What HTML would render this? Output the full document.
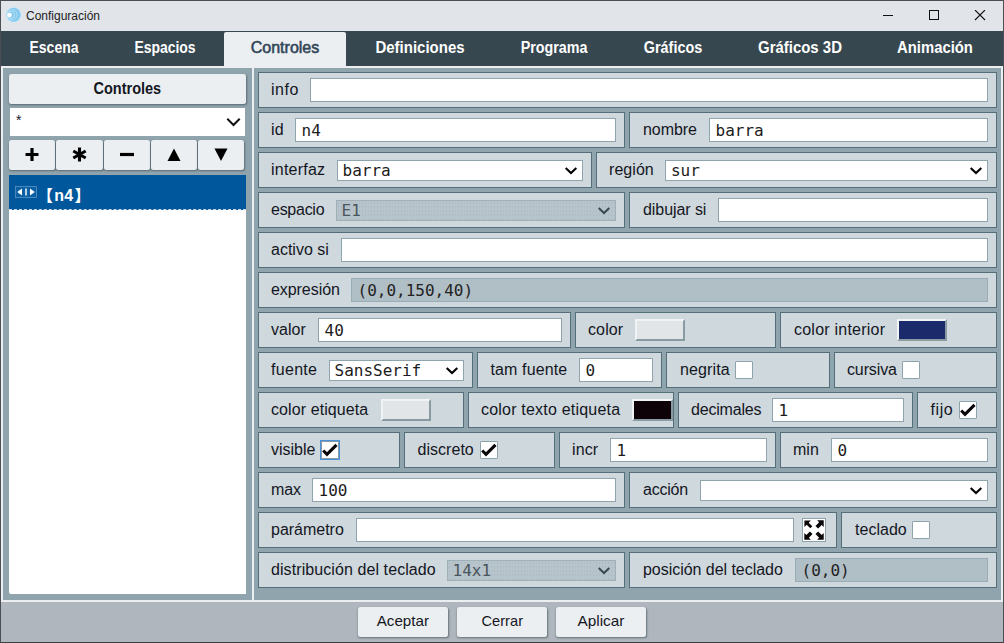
<!DOCTYPE html>
<html lang="es"><head><meta charset="utf-8"><title>Configuración</title>
<style>
*{box-sizing:border-box;margin:0;padding:0}
html,body{width:1004px;height:643px;overflow:hidden;background:#eceff1}
body{position:relative;font-family:"Liberation Sans",sans-serif;font-size:16px;color:#14161f}
#win{position:absolute;left:0;top:0;width:1004px;height:643px;border:1px solid #4b4f54;border-bottom:1px solid #3c3f44;background:#eceff1;overflow:hidden}
#win>*{position:absolute}
#tb{left:0;top:0;width:1002px;height:30px;background:#e1e4e9}
#ttl{left:25px;top:0;height:30px;line-height:30px;font-size:12px;color:#222;white-space:nowrap}
#tabs{left:0px;top:30px;width:1002px;height:35px;background:#37474f}
.tab{position:absolute;top:30px;height:35px;line-height:33px;font-weight:bold;font-size:16px;color:#fff;white-space:nowrap;transform:translateX(-50%)}
#act{left:223px;top:31px;width:122px;height:36px;background:#eceff1;border-radius:2px 2px 0 0}
.tab.on{color:#2f4456;font-weight:normal;-webkit-text-stroke:0.55px #2f4456}
.pn{background:#90a4ae}
.bx{position:absolute;height:36px;border:1px solid #546e7a;background:#cfd8dc}
.lb{position:absolute;height:35px;line-height:35px;white-space:nowrap}
.in{position:absolute;height:24px;border:1px solid #90a4ae;background:#fff;font-family:"DejaVu Sans Mono","Liberation Mono",monospace;font-size:16px;line-height:22px;padding-top:1px;padding-left:5.500px;white-space:nowrap;overflow:hidden;color:#1c1c1c}
.in.dis{background:#b0bec5;color:#222;border-color:#9aacb5}
.se{padding-left:4.500px;padding-top:0;height:21px;line-height:19px;margin-top:2px}
.dis2{background-color:#b8c4cb;background-image:radial-gradient(circle,#aebbc2 0.500px,transparent 0.750px);background-size:3px 4px;color:#4a555c;border-color:#a0b0b9}
.chev{position:absolute;right:4px;top:5px}
.ck{position:absolute;width:18px;height:18px;background:#fff;border:1px solid #8fa3ad;border-radius:1px}
.ck svg{position:absolute;left:-1px;top:-1px}
.ck.fo{outline:1px solid #4a90d9;outline-offset:0;border-color:#8c9aa6;border-radius:0}
.cb{position:absolute;width:50px;height:22px;border:2px solid;border-color:#f0f3f4 #8a9aa3 #8a9aa3 #f0f3f4}
.btn{position:absolute;background:#eceff1;border-radius:2.500px;box-shadow:0.500px 1px 2px rgba(55,71,79,.62);text-align:center;white-space:nowrap}
</style></head><body>
<div id="win">
<div id="tb"></div>
<svg id="ico" style="left:4px;top:5px" width="18" height="18" viewBox="0 0 18 18"><circle cx="8.600" cy="8.700" r="7.800" fill="#c9e8f8"/><circle cx="8.600" cy="8.700" r="7" fill="#86cbef"/><circle cx="6.800" cy="8.900" r="5.200" fill="none" stroke="#b5dff5" stroke-width="0.800"/><circle cx="5.800" cy="8.900" r="3.700" fill="none" stroke="#bfe4f7" stroke-width="0.800"/><circle cx="4.500" cy="9" r="2.300" fill="#fff"/></svg>
<div id="ttl">Configuración</div>
<svg style="left:882px;top:9px" width="110" height="12" viewBox="0 0 110 12"><path d="M0 5.5H10" stroke="#111" stroke-width="1" fill="none"/><rect x="46.5" y="0.5" width="9" height="9" fill="none" stroke="#111" stroke-width="1"/><path d="M92 0 L102 10 M102 0 L92 10" stroke="#111" stroke-width="1.1" fill="none"/></svg>
<div id="tabs"></div>
<div id="act"></div>

<div class="tab" id="tab0" style="left:52.5px;transform:translateX(-50%) scaleX(0.8750)">Escena</div>
<div class="tab" id="tab1" style="left:163.5px;transform:translateX(-50%) scaleX(0.8714)">Espacios</div>
<div class="tab on" id="tab2" style="left:284px;transform:translateX(-50%) scaleX(1.0000)">Controles</div>
<div class="tab" id="tab3" style="left:418.5px;transform:translateX(-50%) scaleX(0.9368)">Definiciones</div>
<div class="tab" id="tab4" style="left:552.5px;transform:translateX(-50%) scaleX(0.8933)">Programa</div>
<div class="tab" id="tab5" style="left:671.75px;transform:translateX(-50%) scaleX(0.9000)">Gráficos</div>
<div class="tab" id="tab6" style="left:799px;transform:translateX(-50%) scaleX(0.9333)">Gráficos 3D</div>
<div class="tab" id="tab7" style="left:934px;transform:translateX(-50%) scaleX(0.9268)">Animación</div>
<div id="app" style="left:-1px;top:-1px;width:1004px;height:643px">
<div class="pn" style="position:absolute;left:3px;top:68px;width:249px;height:532px"></div>
<div class="pn" style="position:absolute;left:254px;top:68px;width:747px;height:532px"></div>
<div class="btn" style="left:9px;top:74px;width:237px;height:30px;line-height:30px;font-weight:bold;font-size:16px"><span id="hdr" style="display:inline-block;transform:scaleX(0.9067)">Controles</span></div>
<div style="position:absolute;left:10px;top:108px;width:235px;height:28px;background:#fff;line-height:24px;padding-left:6px;font-size:14px">*<svg style="position:absolute;right:4px;top:10px" width="15" height="9" viewBox="0 0 15 9"><path d="M2 1.5 L7.5 7 L13 1.5" fill="none" stroke="#111" stroke-width="2" stroke-linecap="square"/></svg></div>
<div class="btn" style="left:9px;top:140px;width:46px;height:30px"><svg width="46" height="30" viewBox="0 0 46 30" style="position:absolute;left:0;top:0"><path d="M23 8v13M16.500 14.500h13" stroke="#000" stroke-width="3.2" fill="none"/></svg></div>
<div class="btn" style="left:56px;top:140px;width:47px;height:30px"><svg width="46" height="30" viewBox="0 0 46 30" style="position:absolute;left:0;top:0"><path d="M23.500 7.500v14M17.300 11l12.400 7M29.700 11l-12.400 7" stroke="#000" stroke-width="3.100" fill="none"/></svg></div>
<div class="btn" style="left:104px;top:140px;width:46px;height:30px"><svg width="46" height="30" viewBox="0 0 46 30" style="position:absolute;left:0;top:0"><path d="M16 14.500h14" stroke="#000" stroke-width="3.2" fill="none"/></svg></div>
<div class="btn" style="left:151px;top:140px;width:46px;height:30px"><svg width="46" height="30" viewBox="0 0 46 30" style="position:absolute;left:0;top:0"><path d="M16.500 21 L23 8.500 L29.500 21Z" fill="#000"/></svg></div>
<div class="btn" style="left:198px;top:140px;width:46px;height:30px"><svg width="46" height="30" viewBox="0 0 46 30" style="position:absolute;left:0;top:0"><path d="M16.500 8.500 L29.500 8.500 L23 21Z" fill="#000"/></svg></div>
<div style="position:absolute;left:9px;top:175px;width:237px;height:419px;background:#fff;border-radius:0 0 0 2px"></div>
<div style="position:absolute;left:9px;top:175px;width:237px;height:35px;background:#01579b;border-bottom:1px dashed #c9d9e8"></div>
<svg style="position:absolute;left:15px;top:186px" width="22" height="12" viewBox="0 0 22 12"><rect x="0.500" y="0.500" width="21" height="11" fill="#0d5fa3" stroke="#8fb8d8" stroke-width="1" stroke-dasharray="1 1"/><path d="M7 2.600v6.800l-4.800-3.400zM15 2.600v6.800l4.800-3.400z" fill="#fff"/><rect x="10" y="2.500" width="2" height="7" fill="#b7d4ea"/></svg>
<div id="itm" style="position:absolute;left:41px;top:177px;height:34px;line-height:38px;font-weight:bold;font-size:16px;color:#fff;white-space:nowrap;font-family:'Liberation Sans','Noto Sans CJK SC',sans-serif"><span style="margin-left:-4px">【</span><span id="itmt" style="letter-spacing:0.200px;margin-left:1.300px">n4</span><span style="margin-left:1.200px">】</span></div>
<div class="bx" style="left:258px;top:72px;width:739px"></div>
<span class="lb" id="t0" style="left:271px;top:72px;letter-spacing:0.501px">info</span>
<div class="in" style="left:310px;top:78px;width:678px"></div>
<div class="bx" style="left:258px;top:112px;width:367px"></div>
<span class="lb" id="t1" style="left:271px;top:112px;letter-spacing:0.173px">id</span>
<div class="in" style="left:295px;top:118px;width:321px">n4</div>
<div class="bx" style="left:629px;top:112px;width:368px"></div>
<span class="lb" id="t2" style="left:643px;top:112px;letter-spacing:-0.075px">nombre</span>
<div class="in" style="left:709px;top:118px;width:279px">barra</div>
<div class="bx" style="left:258px;top:152px;width:334px"></div>
<span class="lb" id="t3" style="left:271px;top:152px;letter-spacing:0.229px">interfaz</span>
<div class="in se" style="left:337px;top:158px;width:246px">barra<svg class="chev" width="14" height="9" viewBox="0 0 14 9"><path d="M1.700 2 L7 7 L12.300 2" fill="none" stroke="#000" stroke-width="2.1" stroke-linecap="butt" stroke-linejoin="miter"/></svg></div>
<div class="bx" style="left:596px;top:152px;width:401px"></div>
<span class="lb" id="t4" style="left:609px;top:152px;letter-spacing:0.053px">región</span>
<div class="in se" style="left:665px;top:158px;width:323px"><span style="margin-left:0.400px">sur</span><svg class="chev" width="14" height="9" viewBox="0 0 14 9"><path d="M1.700 2 L7 7 L12.300 2" fill="none" stroke="#000" stroke-width="2.1" stroke-linecap="butt" stroke-linejoin="miter"/></svg></div>
<div class="bx" style="left:258px;top:192px;width:367px"></div>
<span class="lb" id="t5" style="left:271px;top:192px;letter-spacing:-0.265px">espacio</span>
<div class="in se dis2" style="left:336px;top:198px;width:280px">E1<svg class="chev" width="14" height="9" viewBox="0 0 14 9"><path d="M1.700 2 L7 7 L12.300 2" fill="none" stroke="#3a4a52" stroke-width="2.1" stroke-linecap="butt" stroke-linejoin="miter"/></svg></div>
<div class="bx" style="left:629px;top:192px;width:368px"></div>
<span class="lb" id="t6" style="left:643px;top:192px;letter-spacing:-0.073px">dibujar si</span>
<div class="in" style="left:718px;top:198px;width:270px"></div>
<div class="bx" style="left:258px;top:232px;width:739px"></div>
<span class="lb" id="t7" style="left:271px;top:232px;letter-spacing:0.000px">activo si</span>
<div class="in" style="left:341px;top:238px;width:647px"></div>
<div class="bx" style="left:258px;top:272px;width:739px"></div>
<span class="lb" id="t8" style="left:271px;top:272px;letter-spacing:-0.064px">expresión</span>
<div class="in dis" style="left:351px;top:278px;width:637px">(0,0,150,40)</div>
<div class="bx" style="left:258px;top:312px;width:313px"></div>
<span class="lb" id="t9" style="left:271px;top:312px;letter-spacing:0.023px">valor</span>
<div class="in" style="left:318px;top:318px;width:244px">40</div>
<div class="bx" style="left:575px;top:312px;width:201px"></div>
<span class="lb" id="t10" style="left:588px;top:312px;letter-spacing:0.122px">color</span>
<div class="cb " style="left:635px;top:319px;background:#e1e5e8;"></div>
<div class="bx" style="left:780px;top:312px;width:217px"></div>
<span class="lb" id="t11" style="left:794px;top:312px;letter-spacing:0.233px">color interior</span>
<div class="cb dk" style="left:897px;top:319px;background:#1b2a6b;"></div>
<div class="bx" style="left:258px;top:352px;width:215px"></div>
<span class="lb" id="t12" style="left:271px;top:352px;letter-spacing:0.303px">fuente</span>
<div class="in se" style="left:329px;top:358px;width:135px">SansSerif<svg class="chev" width="14" height="9" viewBox="0 0 14 9"><path d="M1.700 2 L7 7 L12.300 2" fill="none" stroke="#000" stroke-width="2.1" stroke-linecap="butt" stroke-linejoin="miter"/></svg></div>
<div class="bx" style="left:477px;top:352px;width:185px"></div>
<span class="lb" id="t13" style="left:490.5px;top:352px;letter-spacing:0.119px">tam fuente</span>
<div class="in" style="left:579px;top:358px;width:74px">0</div>
<div class="bx" style="left:666px;top:352px;width:164px"></div>
<span class="lb" id="t14" style="left:680px;top:352px;letter-spacing:0.125px">negrita</span>
<div class="ck" style="left:735px;top:361px"></div>
<div class="bx" style="left:834px;top:352px;width:163px"></div>
<span class="lb" id="t15" style="left:847px;top:352px;letter-spacing:-0.127px">cursiva</span>
<div class="ck" style="left:902px;top:361px"></div>
<div class="bx" style="left:258px;top:392px;width:206px"></div>
<span class="lb" id="t16" style="left:271px;top:392px;letter-spacing:0.088px">color etiqueta</span>
<div class="cb " style="left:381px;top:399px;background:#e1e5e8;"></div>
<div class="bx" style="left:468px;top:392px;width:206px"></div>
<span class="lb" id="t17" style="left:481px;top:392px;letter-spacing:0.205px">color texto etiqueta</span>
<div class="cb dk" style="left:632px;top:399px;background:#0d0208;width:41px"></div>
<div class="bx" style="left:678px;top:392px;width:235px"></div>
<span class="lb" id="t18" style="left:691px;top:392px;letter-spacing:-0.192px">decimales</span>
<div class="in" style="left:772px;top:398px;width:132px">1</div>
<div class="bx" style="left:917px;top:392px;width:80px"></div>
<span class="lb" id="t19" style="left:930.5px;top:392px;letter-spacing:0.587px">fijo</span>
<div class="ck" style="left:959px;top:401px"><svg width="18" height="18" viewBox="0 0 18 18"><path d="M2.200 9.500 L6 13.300 L15.500 3.800" fill="none" stroke="#0a0508" stroke-width="3.100" stroke-linecap="butt" stroke-linejoin="miter"/></svg></div>
<div class="bx" style="left:258px;top:432px;width:142px"></div>
<span class="lb" id="t20" style="left:271px;top:432px;letter-spacing:-0.024px">visible</span>
<div class="ck fo" style="left:321px;top:441px"><svg width="18" height="18" viewBox="0 0 18 18"><path d="M2.200 9.500 L6 13.300 L15.500 3.800" fill="none" stroke="#0a0508" stroke-width="3.100" stroke-linecap="butt" stroke-linejoin="miter"/></svg></div>
<div class="bx" style="left:404px;top:432px;width:151px"></div>
<span class="lb" id="t21" style="left:417.5px;top:432px;letter-spacing:0.034px">discreto</span>
<div class="ck" style="left:480px;top:441px"><svg width="18" height="18" viewBox="0 0 18 18"><path d="M2.200 9.500 L6 13.300 L15.500 3.800" fill="none" stroke="#0a0508" stroke-width="3.100" stroke-linecap="butt" stroke-linejoin="miter"/></svg></div>
<div class="bx" style="left:559px;top:432px;width:217px"></div>
<span class="lb" id="t22" style="left:572px;top:432px;letter-spacing:0.130px">incr</span>
<div class="in" style="left:610px;top:438px;width:157px">1</div>
<div class="bx" style="left:780px;top:432px;width:217px"></div>
<span class="lb" id="t23" style="left:793px;top:432px;letter-spacing:0.006px">min</span>
<div class="in" style="left:831px;top:438px;width:157px">0</div>
<div class="bx" style="left:258px;top:472px;width:367px"></div>
<span class="lb" id="t24" style="left:271px;top:472px;letter-spacing:-0.145px">max</span>
<div class="in" style="left:312px;top:478px;width:304px">100</div>
<div class="bx" style="left:629px;top:472px;width:368px"></div>
<span class="lb" id="t25" style="left:643px;top:472px;letter-spacing:-0.242px">acción</span>
<div class="in se" style="left:700px;top:478px;width:288px"><svg class="chev" width="14" height="9" viewBox="0 0 14 9"><path d="M1.700 2 L7 7 L12.300 2" fill="none" stroke="#000" stroke-width="2.1" stroke-linecap="butt" stroke-linejoin="miter"/></svg></div>
<div class="bx" style="left:258px;top:512px;width:579px"></div>
<span class="lb" id="t26" style="left:271px;top:512px;letter-spacing:-0.014px">parámetro</span>
<div class="in" style="left:356px;top:518px;width:438px"></div>
<svg style="position:absolute;left:802px;top:518px" width="24" height="24" viewBox="0 0 24 24"><rect x="0.500" y="0.500" width="23" height="23" fill="#fff" stroke="#8fa3ad"/><g fill="#0a0508"><path d="M2.400 2.400H8.900L6.700 4.700 10.300 8.300 8.300 10.300 4.700 6.700 2.400 8.900Z"/><path d="M2.300 2.300H8.900L6.900 4.300 10.500 7.900 7.900 10.500 4.300 6.900 2.300 8.900Z" transform="translate(24 0) scale(-1 1)"/><path d="M2.300 2.300H8.900L6.900 4.300 10.500 7.900 7.900 10.500 4.300 6.900 2.300 8.900Z" transform="translate(0 24) scale(1 -1)"/><path d="M2.300 2.300H8.900L6.900 4.300 10.500 7.900 7.900 10.500 4.300 6.900 2.300 8.900Z" transform="translate(24 24) scale(-1 -1)"/></g></svg>
<div class="bx" style="left:841px;top:512px;width:156px"></div>
<span class="lb" id="t27" style="left:855px;top:512px;letter-spacing:0.029px">teclado</span>
<div class="ck" style="left:912px;top:521px"></div>
<div class="bx" style="left:258px;top:552px;width:367px"></div>
<span class="lb" id="t28" style="left:271px;top:552px;letter-spacing:0.085px">distribución del teclado</span>
<div class="in se dis2" style="left:447px;top:558px;width:169px">14x1<svg class="chev" width="14" height="9" viewBox="0 0 14 9"><path d="M1.700 2 L7 7 L12.300 2" fill="none" stroke="#3a4a52" stroke-width="2.1" stroke-linecap="butt" stroke-linejoin="miter"/></svg></div>
<div class="bx" style="left:629px;top:552px;width:368px"></div>
<span class="lb" id="t29" style="left:643px;top:552px;letter-spacing:-0.037px">posición del teclado</span>
<div class="in dis" style="left:795px;top:558px;width:193px">(0,0)</div>
<div style="position:absolute;left:1px;top:602px;width:1002px;height:40px;background:#afb6bd"></div>
<div class="btn bb" style="left:358px;top:607px;width:90px;height:30px;line-height:27px;font-size:15px"><span id="b0" style="display:inline-block;transform:scaleX(1.0096)">Aceptar</span></div>
<div class="btn bb" style="left:457px;top:607px;width:90px;height:30px;line-height:27px;font-size:15px"><span id="b1" style="display:inline-block;transform:scaleX(0.9767)">Cerrar</span></div>
<div class="btn bb" style="left:556px;top:607px;width:90px;height:30px;line-height:27px;font-size:15px"><span id="b2" style="display:inline-block;transform:scaleX(1.0217)">Aplicar</span></div>
</div></div></body></html>
